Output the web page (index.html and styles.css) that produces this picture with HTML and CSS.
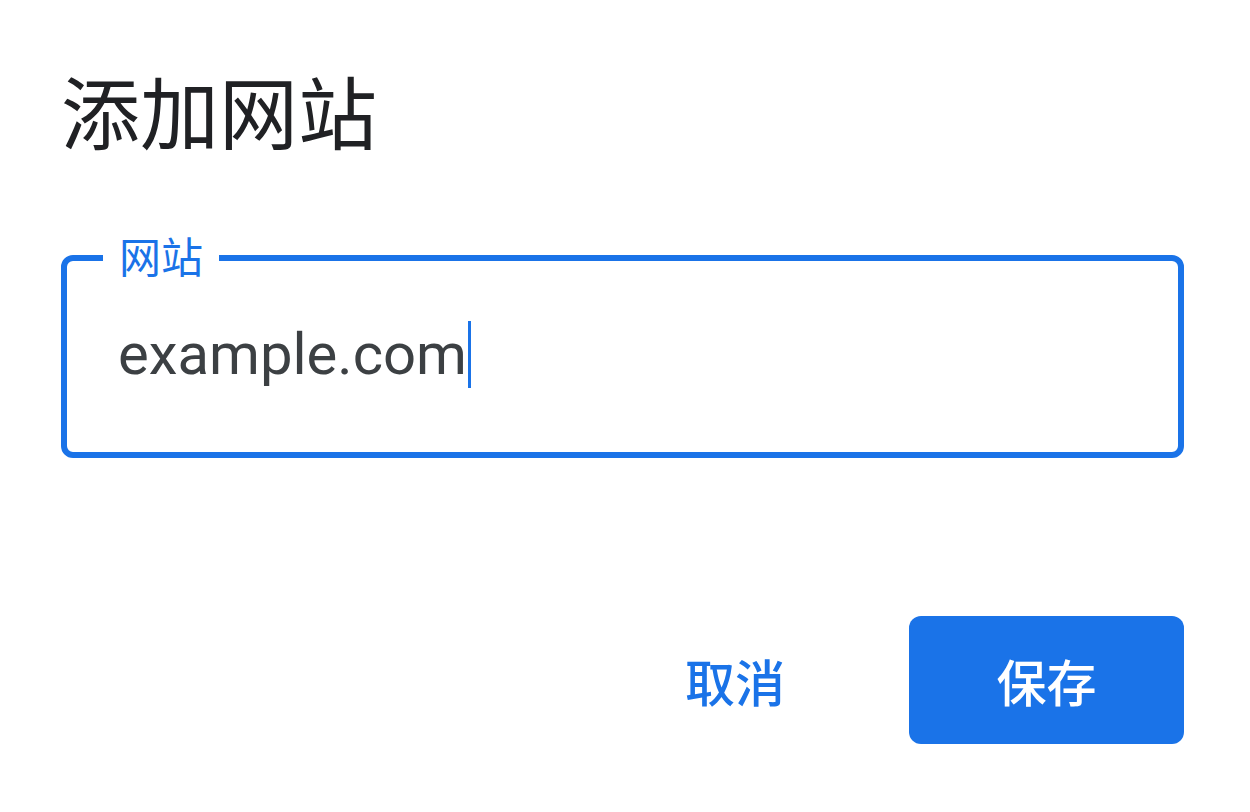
FILE: index.html
```html
<!DOCTYPE html>
<html lang="zh-CN">
<head>
<meta charset="utf-8">
<title>添加网站</title>
<link rel="stylesheet" href="styles.css">
</head>
<body>
<div class="dialog">
  <h1 class="title">添加网站</h1>
  <fieldset class="field">
    <legend class="field-label">网站</legend>
    <div class="field-input"><span class="value">example.com</span><span class="caret"></span></div>
  </fieldset>
  <div class="actions">
    <button class="btn btn-text" type="button">取消</button>
    <button class="btn btn-primary" type="button">保存</button>
  </div>
</div>
</body>
</html>
```

FILE: styles.css
```css
html, body {
  margin: 0;
  padding: 0;
  background: #ffffff;
}

body {
  width: 1250px;
  height: 812px;
  overflow: hidden;
  font-family: Roboto, "Noto Sans CJK SC", sans-serif;
}

.dialog {
  display: flex;
  flex-direction: column;
  padding: 65px 66px 0 61px;
}

.title {
  margin: 0;
  font-family: "Noto Sans CJK SC", sans-serif;
  font-weight: 400;
  font-size: 79px;
  line-height: 90px;
  color: #202124;
  padding-left: 0;
}

.field {
  margin: 79px 0 0 0;
  padding: 0 0 0 51px;
  border: 6px solid #1a73e8;
  border-radius: 12px;
  height: 224px;
  box-sizing: border-box;
  min-width: 0;
}

.field-label {
  margin-left: -15px;
  padding: 0 16px 6px;
  font-family: "Noto Sans CJK SC", sans-serif;
  font-size: 42px;
  line-height: 42px;
  color: #1a73e8;
}

.field-input {
  display: flex;
  align-items: center;
  height: 160px;
  margin-top: -8px;
}

.value {
  font-family: Roboto, sans-serif;
  font-size: 58px;
  color: #3c4043;
  line-height: 68px;
}

.caret {
  width: 3px;
  height: 67px;
  background: #1a73e8;
  margin-left: 1px;
}

.actions {
  display: flex;
  justify-content: flex-end;
  align-items: center;
  gap: 104px;
  margin-top: 158px;
}

.btn {
  border: none;
  font-family: "Noto Sans CJK SC", sans-serif;
  font-weight: 500;
  cursor: pointer;
  padding: 0;
}

.btn-text {
  background: transparent;
  color: #1a73e8;
  font-size: 50px;
  padding: 0 20px;
  height: 128px;
}

.btn-primary {
  width: 275px;
  height: 128px;
  background: #1a73e8;
  color: #ffffff;
  font-size: 50px;
  border-radius: 12px;
}
```
